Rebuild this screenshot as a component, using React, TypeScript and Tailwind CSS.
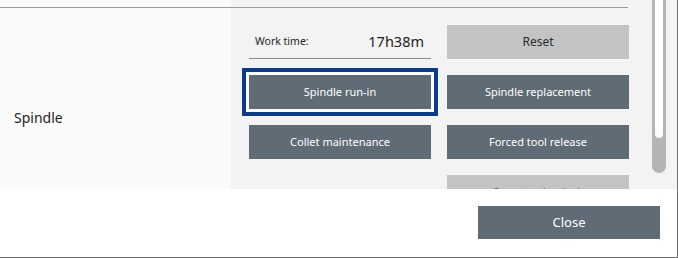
import React from "react";

const font = { fontFamily: '"Noto Sans", "Open Sans", sans-serif' };

function Btn({ children, focused }: { children: React.ReactNode; focused?: boolean }) {
  return (
    <div
      className={
        "h-[34px] bg-[#5f6b75] text-white text-[11px] flex items-center justify-center" +
        (focused ? " ring-4 ring-[#0b3b8f] ring-offset-[3px] ring-offset-white" : "")
      }
    >
      {children}
    </div>
  );
}

export default function App() {
  return (
    <div style={font} className="w-[678px] h-[258px] bg-white border-r border-b border-[#6e6e6e] flex flex-col overflow-hidden">
      <div className="h-[189px] relative overflow-hidden bg-[#f3f3f3] shrink-0">
        <div className="flex h-[7px]">
          <div className="w-[231px] bg-[#fafafa]" />
          <div className="flex-1" />
        </div>
        <div className="w-[628px] h-px bg-[#9c9c9c]" />
        <div className="flex">
          <div className="w-[231px] bg-[#fafafa] flex items-center pl-[14px] text-[14px] text-[#1e1e1e]">
            Spindle
          </div>
          <div className="grid grid-cols-[182px_182px] gap-4 pl-[18px] pt-[17px] pb-[17px]">
            <div className="h-[34px] border-b border-[#8c8c8c] flex items-center justify-between pl-[6px] pr-[7px] text-[#1e1e1e]">
              <span className="text-[10.5px]">Work time:</span>
              <span className="text-[14.5px]">17h38m</span>
            </div>
            <div className="h-[34px] bg-[#c3c3c3] text-[#2a2a2a] text-[12px] flex items-center justify-center">
              Reset
            </div>
            <Btn focused>Spindle run-in</Btn>
            <Btn>Spindle replacement</Btn>
            <Btn>Collet maintenance</Btn>
            <Btn>Forced tool release</Btn>
            <div />
            <div className="h-[34px] bg-[#c3c3c3] text-[#6a6a6a] text-[11px] flex items-center justify-center">
              Spare tool unlock
            </div>
          </div>
        </div>
        <div className="absolute left-[652px] top-0 w-[14px] h-[173px] bg-[#b4b4b4] rounded-b-[7px]">
          <div className="ml-[3px] w-[8px] h-[138px] bg-white rounded-b-[4px]" />
        </div>
      </div>
      <div className="flex-1 flex justify-end items-start pt-[17px] pr-[17px]">
        <div className="w-[182px] h-[33px] bg-[#5f6b75] text-white text-[13px] flex items-center justify-center">
          Close
        </div>
      </div>
    </div>
  );
}
